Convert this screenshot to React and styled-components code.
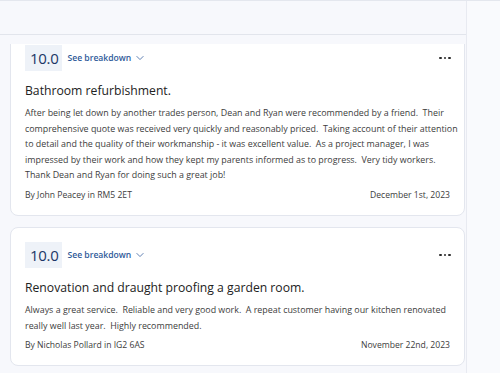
import React from 'react';
import styled, { createGlobalStyle } from 'styled-components';

const GlobalStyle = createGlobalStyle`
  html, body {
    margin: 0;
    padding: 0;
    background: #f7f8fc;
    font-family: "Open Sans", "Liberation Sans", sans-serif;
  }
  body {
    border-top: 1px solid #e4e7ee;
  }
`;

const reviews = [
  {
    score: '10.0',
    title: 'Bathroom refurbishment.',
    body:
      'After being let down by another trades person, Dean and Ryan were recommended by a friend.  Their comprehensive quote was received very quickly and reasonably priced.  Taking account of their attention to detail and the quality of their workmanship - it was excellent value.  As a project manager, I was impressed by their work and how they kept my parents informed as to progress.  Very tidy workers.  Thank Dean and Ryan for doing such a great job!',
    author: 'By John Peacey in RM5 2ET',
    date: 'December 1st, 2023'
  },
  {
    score: '10.0',
    title: 'Renovation and draught proofing a garden room.',
    body:
      'Always a great service.  Reliable and very good work.  A repeat customer having our kitchen renovated really well last year.  Highly recommended.',
    author: 'By Nicholas Pollard in IG2 6AS',
    date: 'November 22nd, 2023'
  }
];

const Page = styled.div`
  display: flex;
  height: 372px;
`;

const Column = styled.div`
  width: 466px;
  display: flex;
  flex-direction: column;
  border-right: 1px solid #e8eaf1;
`;

const Header = styled.div`
  height: 33px;
  border-bottom: 1px solid #e2e5ec;
  flex-shrink: 0;
`;

const Side = styled.div`
  flex: 1;
  background: #f9fafd;
`;

const Viewport = styled.div`
  margin-top: 9px;
  flex: 1;
  overflow: hidden;
`;

const List = styled.div`
  display: flex;
  flex-direction: column;
  gap: 11px;
  padding: 0 1px 0 10px;
  margin-top: -14px;
`;

const Card = styled.div`
  background: #fff;
  border: 1px solid #e3e6ee;
  border-radius: 8px;
  padding: 14px 14px 12px 14px;
`;

const TopRow = styled.div`
  display: flex;
  align-items: center;
  gap: 5px;
`;

const Score = styled.div`
  background: #eef2f8;
  color: #1c3766;
  font-size: 15px;
  line-height: 26px;
  padding: 0 4px 0 5px;
  letter-spacing: -0.3px;
`;

const Breakdown = styled.div`
  display: flex;
  align-items: center;
  gap: 4px;
  color: #2f5a99;
  font-size: 8.6px;
  font-weight: 600;
`;

const More = styled.div`
  margin-left: auto;
  margin-right: -1px;
  display: flex;
  gap: 2px;
`;

const Dot = styled.span`
  width: 2.6px;
  height: 2.6px;
  border-radius: 50%;
  background: #2a2a2a;
`;

const Title = styled.h3`
  margin: 11px 0 5px;
  font-size: 12.2px;
  font-weight: 400;
  color: #222;
  line-height: 18px;
`;

const Body = styled.p`
  margin: 0 -10px 0 0;
  font-size: 8.9px;
  line-height: 15.6px;
  color: #3c3c3c;
  white-space: pre-wrap;
`;

const Footer = styled.div`
  display: flex;
  justify-content: space-between;
  margin-top: 5px;
  font-size: 8.6px;
  line-height: 15px;
  color: #3c3c3c;
`;

function Chevron() {
  return (
    <svg width="10" height="10" viewBox="0 0 16 16" fill="none" stroke="#4a6fa8" strokeWidth="1.4" strokeLinecap="round" strokeLinejoin="round">
      <path d="M3 5.5l5 5 5-5" />
    </svg>
  );
}

function Review({ r }) {
  return (
    <Card>
      <TopRow>
        <Score>{r.score}</Score>
        <Breakdown>
          See breakdown <Chevron />
        </Breakdown>
        <More>
          <Dot />
          <Dot />
          <Dot />
        </More>
      </TopRow>
      <Title>{r.title}</Title>
      <Body>{r.body}</Body>
      <Footer>
        <span>{r.author}</span>
        <span>{r.date}</span>
      </Footer>
    </Card>
  );
}

export default function App() {
  return (
    <>
      <GlobalStyle />
      <Page>
        <Column>
          <Header />
          <Viewport>
            <List>
              {reviews.map((r, i) => (
                <Review key={i} r={r} />
              ))}
            </List>
          </Viewport>
        </Column>
        <Side />
      </Page>
    </>
  );
}
